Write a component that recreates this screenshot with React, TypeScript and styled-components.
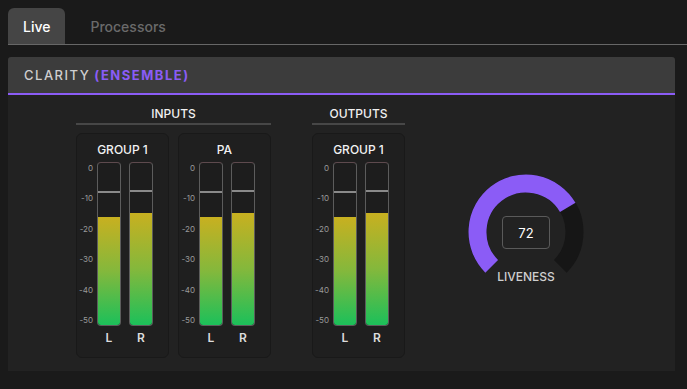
import React from "react";
import styled, { createGlobalStyle } from "styled-components";

const GlobalStyle = createGlobalStyle`
  html, body { margin: 0; padding: 0; background: #1a1a1a; }
  body { font-family: Inter, "Liberation Sans", sans-serif; }
  * { box-sizing: border-box; }
`;

const PURPLE = "#8b5cf6";

const Page = styled.div`
  width: 687px;
  height: 389px;
  padding: 8px 0 0 8px;
  background: #1a1a1a;
  overflow: hidden;
`;

const TabBar = styled.div`
  display: flex;
  gap: 10px;
  border-bottom: 1px solid #676767;
`;

const Tab = styled.div<{ $active?: boolean }>`
  height: 36px;
  padding: 0 15px;
  display: flex;
  align-items: center;
  font-size: 14px;
  font-weight: 500;
  border-radius: 6px 6px 0 0;
  background: ${(p) => (p.$active ? "#454545" : "transparent")};
  color: ${(p) => (p.$active ? "#ffffff" : "#6a6a6a")};
`;

const Panel = styled.div`
  margin: 12px 12px 0 0;
`;

const PanelHeader = styled.div`
  height: 38px;
  padding: 0 16px;
  display: flex;
  align-items: center;
  background: #3c3c3c;
  border-bottom: 2px solid ${PURPLE};
  border-radius: 3px 3px 0 0;
  font-size: 13px;
  letter-spacing: 1.5px;
  color: #cfcfcf;
  font-weight: 500;
`;

const Accent = styled.span`
  color: ${PURPLE};
  font-weight: 700;
  margin-left: 4px;
`;

const PanelBody = styled.div`
  height: 276px;
  background: #222222;
  display: flex;
  align-items: flex-start;
  padding: 12px 0 0 68px;
`;

const Section = styled.div<{ $gapAfter: number }>`
  display: flex;
  flex-direction: column;
  margin-right: ${(p) => p.$gapAfter}px;
`;

const SectionTitle = styled.div`
  font-size: 12px;
  line-height: 14px;
  font-weight: 500;
  color: #f0f0f0;
  text-align: center;
  padding-bottom: 2px;
  border-bottom: 2px solid #474747;
  margin-bottom: 8px;
`;

const Cards = styled.div`
  display: flex;
  gap: 9px;
`;

const Card = styled.div`
  width: 93px;
  height: 225px;
  background: #1f1f1f;
  border: 1px solid #191919;
  border-radius: 6px;
  padding-top: 9px;
  display: flex;
  flex-direction: column;
`;

const CardTitle = styled.div`
  font-size: 12px;
  line-height: 14px;
  font-weight: 500;
  color: #f2f2f2;
  text-align: center;
  margin-bottom: 5px;
`;

const MeterRow = styled.div`
  display: flex;
  align-items: flex-start;
`;

const Scale = styled.div`
  width: 16px;
  height: 164px;
  margin-right: 4px;
  padding: 1px 0;
  display: flex;
  flex-direction: column;
  justify-content: space-between;
  align-items: flex-end;
  font-size: 8px;
  line-height: 10px;
  color: #9a9a9a;
`;

const Channel = styled.div`
  width: 24px;
  margin-right: 8px;
  display: flex;
  flex-direction: column;
  align-items: center;
`;

const Bar = styled.div`
  position: relative;
  width: 24px;
  height: 164px;
  border: 1px solid #5c5c5c;
  border-top-color: #5e4a4e;
  border-radius: 4px;
  background: #1d1d1d;
  overflow: hidden;
`;

const Fill = styled.div`
  position: absolute;
  left: 0;
  right: 0;
  bottom: 0;
  background: linear-gradient(to bottom, #c8b020 0%, #84b83c 50%, #1cc05a 100%);
`;

const Peak = styled.div`
  position: absolute;
  left: 0;
  right: 0;
  height: 2px;
  background: #8a8a8a;
`;

const ChannelLabel = styled.div`
  margin-top: 5px;
  font-size: 12px;
  line-height: 14px;
  font-weight: 600;
  color: #dcdcdc;
`;

const GaugeWrap = styled.div`
  margin-top: 65px;
  width: 120px;
  display: flex;
  flex-direction: column;
  align-items: center;
`;

const Dial = styled.div`
  position: relative;
  width: 120px;
  height: 98px;
  svg {
    overflow: visible;
    display: block;
  }
`;

const ValueBox = styled.div`
  position: absolute;
  left: 36px;
  top: 44px;
  width: 48px;
  height: 33px;
  border: 1px solid #5a5a5a;
  border-radius: 4px;
  display: flex;
  align-items: center;
  justify-content: center;
  font-size: 13px;
  color: #ffffff;
`;

const GaugeLabel = styled.div`
  font-size: 12px;
  line-height: 14px;
  font-weight: 500;
  color: #cfcfcf;
`;

type Ch = { name: string; level: number; peak: number };
type Group = { title: string; channels: Ch[] };

const SCALE = ["0", "-10", "-20", "-30", "-40", "-50"];

function Meter({ group }: { group: Group }) {
  return (
    <Card>
      <CardTitle>{group.title}</CardTitle>
      <MeterRow>
        <Scale>
          {SCALE.map((s) => (
            <span key={s}>{s}</span>
          ))}
        </Scale>
        {group.channels.map((c) => (
          <Channel key={c.name}>
            <Bar>
              <Peak style={{ top: `${c.peak}px` }} />
              <Fill style={{ height: `${c.level}%` }} />
            </Bar>
            <ChannelLabel>{c.name}</ChannelLabel>
          </Channel>
        ))}
      </MeterRow>
    </Card>
  );
}

function polar(cx: number, cy: number, r: number, deg: number) {
  const a = (deg * Math.PI) / 180;
  return [cx + r * Math.sin(a), cy - r * Math.cos(a)];
}

function arc(cx: number, cy: number, r: number, a0: number, a1: number) {
  const [x0, y0] = polar(cx, cy, r, a0);
  const [x1, y1] = polar(cx, cy, r, a1);
  const large = a1 - a0 > 180 ? 1 : 0;
  return `M ${x0} ${y0} A ${r} ${r} 0 ${large} 1 ${x1} ${y1}`;
}

function Gauge({ value, label }: { value: number; label: string }) {
  const start = -135;
  const end = 135;
  const v = start + ((end - start) * value) / 100;
  return (
    <GaugeWrap>
      <Dial>
        <svg width="120" height="98" viewBox="0 0 120 98">
          <path d={arc(60, 60, 48.5, start, end)} stroke="#161616" strokeWidth="18" fill="none" />
          <path d={arc(60, 60, 48.5, start, v)} stroke={PURPLE} strokeWidth="18" fill="none" />
        </svg>
        <ValueBox>{value}</ValueBox>
      </Dial>
      <GaugeLabel>{label}</GaugeLabel>
    </GaugeWrap>
  );
}

const mk = (title: string): Group => ({
  title,
  channels: [
    { name: "L", level: 66.5, peak: 28 },
    { name: "R", level: 69, peak: 27 },
  ],
});

export default function App() {
  return (
    <>
      <GlobalStyle />
      <Page>
        <TabBar>
          <Tab $active>Live</Tab>
          <Tab>Processors</Tab>
        </TabBar>
        <Panel>
          <PanelHeader>
            CLARITY<Accent>(ENSEMBLE)</Accent>
          </PanelHeader>
          <PanelBody>
            <Section $gapAfter={41}>
              <SectionTitle>INPUTS</SectionTitle>
              <Cards>
                <Meter group={mk("GROUP 1")} />
                <Meter group={mk("PA")} />
              </Cards>
            </Section>
            <Section $gapAfter={61}>
              <SectionTitle>OUTPUTS</SectionTitle>
              <Cards>
                <Meter group={mk("GROUP 1")} />
              </Cards>
            </Section>
            <Gauge value={72} label="LIVENESS" />
          </PanelBody>
        </Panel>
      </Page>
    </>
  );
}
